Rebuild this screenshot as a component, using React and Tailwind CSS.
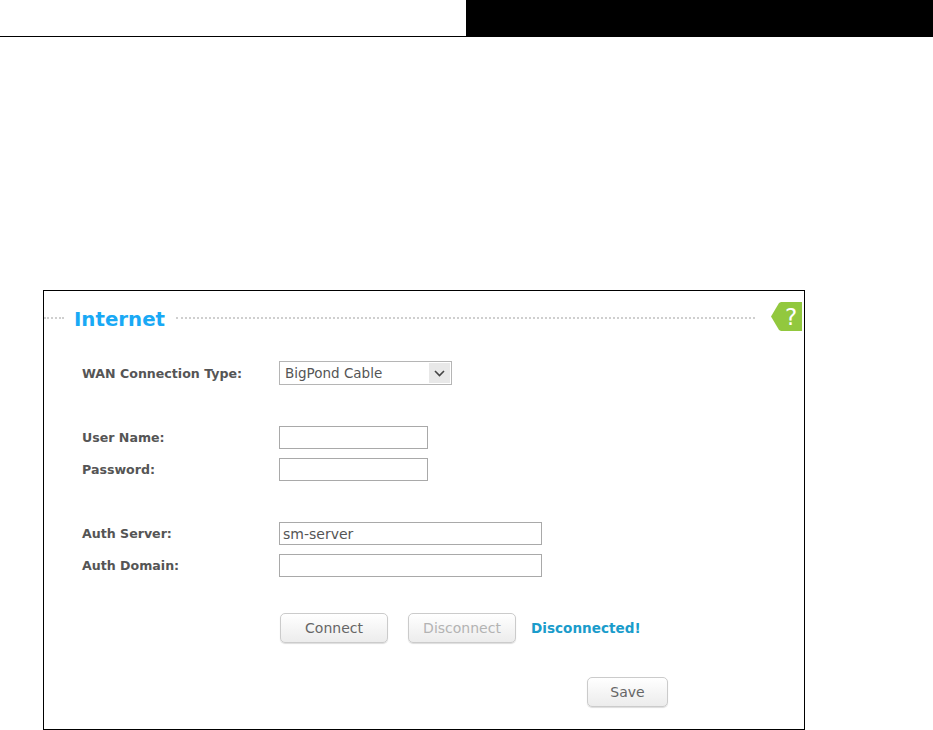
import React from 'react';

const font = 'font-["DejaVu_Sans",sans-serif]';

const Row = ({ label, className, children }) => (
  <div className={`flex items-center h-6 ${className}`}>
    <label className="w-[235px] pl-[38px] pt-[2px] shrink-0 text-[12.6px] font-bold text-[#555]">{label}</label>
    {children}
  </div>
);

const TextInput = ({ width, value }) => (
  <input
    readOnly
    value={value || ''}
    className={`${width} h-[23px] self-end border border-[#a9a9a9] bg-white px-[3px] text-[14px] text-[#555] outline-none`}
  />
);

const Button = ({ width, disabled, children }) => (
  <button
    className={`${width} h-[30px] rounded-[5px] border border-[#cbcbcb] bg-gradient-to-b from-white to-[#ececec] text-[14px] shadow-[0_1px_1px_#ddd] ${disabled ? 'text-[#b3b3b3]' : 'text-[#666]'}`}
  >
    {children}
  </button>
);

const App = () => {
  return (
    <div className={`${font} min-h-[730px] bg-white overflow-hidden`}>
      <div className="flex h-[37px] border-b border-black">
        <div className="w-[466px]" />
        <div className="flex-1 bg-black" />
      </div>

      <div className="ml-[43px] mt-[253px] w-[762px] h-[440px] border border-black">
        <div className="flex items-center h-[32px] mt-[11px]">
          <div className="w-[20px] border-t-2 border-dotted border-[#cfcfcf]" />
          <h2 className="ml-[10px] w-[91px] pt-[4px] text-[19.8px] font-bold leading-none whitespace-nowrap text-[#19a9f5]">Internet</h2>
          <div className="ml-[11px] w-[579px] border-t-2 border-dotted border-[#cfcfcf]" />
          <svg className="ml-[16px] shrink-0 self-start" width="31" height="29" viewBox="0 0 31 29">
            <path d="M0 14.5 L8 1 L10 0 H31 V29 H10 L8 28 Z" fill="#92c83e" />
            <text x="20" y="23" textAnchor="middle" fontSize="23" fill="#fff" fontFamily="DejaVu Sans, sans-serif">?</text>
          </svg>
        </div>

        <Row label="WAN Connection Type:" className="mt-[27px]">
          <div className="flex items-center justify-between w-[173px] h-6 border border-[#b5b5b5] pl-[5px] pr-px text-[13.5px] text-[#555]">
            <span className="pt-px">BigPond Cable</span>
            <span className="flex items-center justify-center w-[21px] h-[20px] bg-[#e8e8e8]">
              <svg width="11" height="7" viewBox="0 0 11 7" fill="none">
                <path d="M1 1 L5.5 5.5 L10 1" stroke="#444" strokeWidth="1.6" />
              </svg>
            </span>
          </div>
        </Row>

        <Row label="User Name:" className="mt-[40px]">
          <TextInput width="w-[149px]" />
        </Row>
        <Row label="Password:" className="mt-2">
          <TextInput width="w-[149px]" />
        </Row>
        <Row label="Auth Server:" className="mt-[40px]">
          <TextInput width="w-[263px]" value="sm-server" />
        </Row>
        <Row label="Auth Domain:" className="mt-2">
          <TextInput width="w-[263px]" />
        </Row>

        <div className="flex items-center mt-[36px] ml-[236px]">
          <Button width="w-[108px]">Connect</Button>
          <Button width="w-[108px] ml-[20px]" disabled>Disconnect</Button>
          <span className="ml-[15px] text-[13.6px] font-bold text-[#1a9ccb]">Disconnected!</span>
        </div>

        <div className="mt-[34px] ml-[543px]">
          <Button width="w-[81px]">Save</Button>
        </div>
      </div>
    </div>
  );
};

export default App;
